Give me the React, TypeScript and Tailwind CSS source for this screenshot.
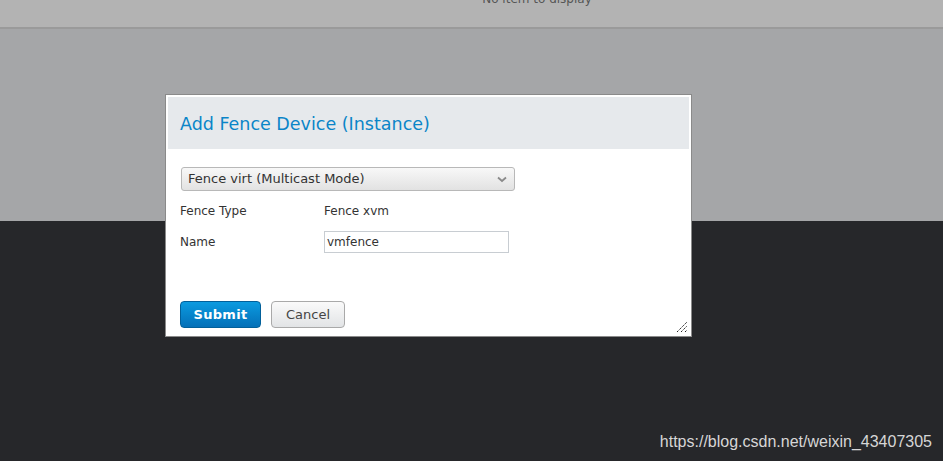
import React from "react";

export default function App() {
  return (
    <div className="relative w-[943px] h-[461px] overflow-hidden bg-[#26272a]" style={{ fontFamily: '"DejaVu Sans", sans-serif' }}>
      <div className="h-[27px] bg-[#b3b3b3] overflow-hidden flex justify-center">
        <div className="-mt-[10px] ml-[131px] text-[12px] text-[#555]">No item to display</div>
      </div>
      <div className="h-[2px] bg-[#9a9a9a]" />
      <div className="h-[192px] bg-[#a5a6a8]" />

      <div className="absolute left-[165px] top-[94px] w-[527px] h-[243px] bg-white border border-[#8a8a8a] p-[2px] flex flex-col">
        <div className="h-[52px] bg-[#e6e9ec] flex items-center pl-[12px] pt-[3px]">
          <span className="text-[17.5px] text-[#0a85c8]">Add Fence Device (Instance)</span>
        </div>
        <div className="pl-[12px] pt-[18px] flex flex-col text-[12px] text-[#333]">
          <div className="ml-[1px] w-[334px] h-[24px] rounded-[3px] border border-[#b8b8b8] bg-gradient-to-b from-[#f8f8f8] to-[#e2e2e2] flex items-center justify-between px-[6px]">
            <span className="text-[13px] text-[#333]">Fence virt (Multicast Mode)</span>
            <svg width="10" height="7" viewBox="0 0 10 7" className="mr-[1px]">
              <path d="M1 1.5 L5 5 L9 1.5" fill="none" stroke="#8a8a8a" strokeWidth="1.8" />
            </svg>
          </div>
          <div className="flex items-center mt-[10px] h-[20px]">
            <span className="w-[144px]">Fence Type</span>
            <span>Fence xvm</span>
          </div>
          <div className="flex items-center mt-[10px] h-[22px]">
            <span className="w-[144px]">Name</span>
            <div className="w-[185px] h-[22px] border border-[#c8cdd2] flex items-center px-[2px] text-[12px] text-[#333]">vmfence</div>
          </div>
          <div className="flex mt-[48px] gap-[10px]">
            <button className="w-[81px] h-[27px] rounded-[4px] border border-[#02609a] bg-gradient-to-b from-[#0c9be0] to-[#0570b8] text-white font-bold text-[13px] tracking-[0.3px]">Submit</button>
            <button className="w-[74px] h-[27px] rounded-[4px] border border-[#a9a9a9] bg-gradient-to-b from-[#fafafa] to-[#e2e4e6] text-[#444] text-[13px]">Cancel</button>
          </div>
        </div>
        <svg width="12" height="12" viewBox="0 0 12 12" className="absolute right-[3px] bottom-[3px]">
          <path d="M1 11 L11 1 M5 11 L11 5 M9 11 L11 9" stroke="#222" strokeWidth="1" strokeDasharray="1.4 0.8" />
        </svg>
      </div>

      <div className="absolute right-[11px] top-[430px] text-[16px] text-[#d6d6d6]" style={{ fontFamily: '"Liberation Sans", Arial, sans-serif' }}>
        https://blog.csdn.net/weixin_43407305
      </div>
    </div>
  );
}
